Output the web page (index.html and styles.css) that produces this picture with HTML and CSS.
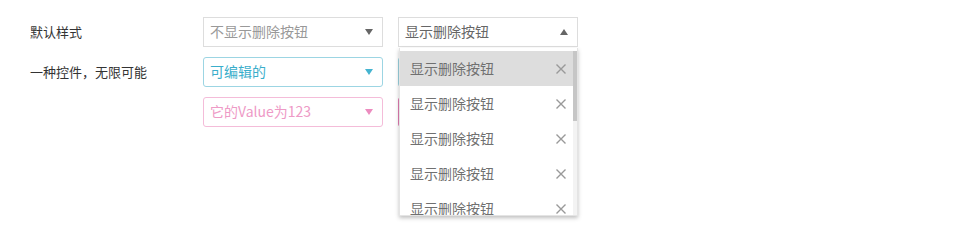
FILE: index.html
```html
<!DOCTYPE html>
<html lang="zh">
<head>
    <meta charset="UTF-8">
    <title>Select 示例</title>
    <link rel="stylesheet" href="styles.css">
</head>
<body>
    <div class="demo">
        <div class="row">
            <div class="label">默认样式</div>
            <div class="select">
                <span class="select-text placeholder">不显示删除按钮</span>
                <span class="arrow"></span>
            </div>
            <div class="select-wrap">
                <div class="select open">
                    <span class="select-text">显示删除按钮</span>
                    <span class="arrow up"></span>
                </div>
                <!-- 下拉列表 -->
                <div class="dropdown">
                    <ul class="options">
                        <li class="option active"><span>显示删除按钮</span><svg class="close" viewBox="0 0 10 10"><path d="M0.5 0.5L9.5 9.5M9.5 0.5L0.5 9.5"/></svg></li>
                        <li class="option"><span>显示删除按钮</span><svg class="close" viewBox="0 0 10 10"><path d="M0.5 0.5L9.5 9.5M9.5 0.5L0.5 9.5"/></svg></li>
                        <li class="option"><span>显示删除按钮</span><svg class="close" viewBox="0 0 10 10"><path d="M0.5 0.5L9.5 9.5M9.5 0.5L0.5 9.5"/></svg></li>
                        <li class="option"><span>显示删除按钮</span><svg class="close" viewBox="0 0 10 10"><path d="M0.5 0.5L9.5 9.5M9.5 0.5L0.5 9.5"/></svg></li>
                        <li class="option"><span>显示删除按钮</span><svg class="close" viewBox="0 0 10 10"><path d="M0.5 0.5L9.5 9.5M9.5 0.5L0.5 9.5"/></svg></li>
                        <li class="option"><span>显示删除按钮</span><svg class="close" viewBox="0 0 10 10"><path d="M0.5 0.5L9.5 9.5M9.5 0.5L0.5 9.5"/></svg></li>
                        <li class="option"><span>显示删除按钮</span><svg class="close" viewBox="0 0 10 10"><path d="M0.5 0.5L9.5 9.5M9.5 0.5L0.5 9.5"/></svg></li>
                        <li class="option"><span>显示删除按钮</span><svg class="close" viewBox="0 0 10 10"><path d="M0.5 0.5L9.5 9.5M9.5 0.5L0.5 9.5"/></svg></li>
                        <li class="option"><span>显示删除按钮</span><svg class="close" viewBox="0 0 10 10"><path d="M0.5 0.5L9.5 9.5M9.5 0.5L0.5 9.5"/></svg></li>
                        <li class="option"><span>显示删除按钮</span><svg class="close" viewBox="0 0 10 10"><path d="M0.5 0.5L9.5 9.5M9.5 0.5L0.5 9.5"/></svg></li>
                        <li class="option"><span>显示删除按钮</span><svg class="close" viewBox="0 0 10 10"><path d="M0.5 0.5L9.5 9.5M9.5 0.5L0.5 9.5"/></svg></li>
                    </ul>
                    <div class="scrollbar"><div class="thumb"></div></div>
                </div>
            </div>
        </div>
        <div class="row">
            <div class="label">一种控件，无限可能</div>
            <div class="select info">
                <span class="select-text">可编辑的</span>
                <span class="arrow"></span>
            </div>
            <div class="select info">
                <span class="select-text">可编辑的</span>
                <span class="arrow"></span>
            </div>
        </div>
        <div class="row">
            <div class="label"></div>
            <div class="select pink">
                <span class="select-text">它的Value为123</span>
                <span class="arrow"></span>
            </div>
            <div class="select pink-fill">
                <span class="select-text">它的Value为123</span>
                <span class="arrow"></span>
            </div>
        </div>
    </div>
</body>
</html>
```

FILE: styles.css
```css
html, body {
    height: 100%;
}

body {
    margin: 0;
    background: #fff;
    font-family: "Microsoft YaHei", "Noto Sans CJK SC", "Noto Sans", sans-serif;
    color: #333;
}

.demo {
    box-sizing: border-box;
    min-height: 100%;
    padding: 17px 0 0 30px;
    display: flex;
    flex-direction: column;
    gap: 10px;
}

.row {
    display: flex;
    align-items: center;
    gap: 15px;
}

.label {
    width: 158px;
    font-size: 13px;
    color: #333;
    padding-bottom: 2px;
}

.select-wrap {
    position: relative;
}

.select {
    box-sizing: border-box;
    width: 180px;
    height: 30px;
    border: 1px solid #ddd;
    background: #fff;
    display: flex;
    align-items: center;
    justify-content: space-between;
    padding: 0 9px 0 6px;
    font-size: 14px;
    color: #666;
}

.select-text {
    padding-bottom: 2px;
}

.select-text.placeholder {
    color: #999;
}

.arrow {
    width: 0;
    height: 0;
    border-left: 4px solid transparent;
    border-right: 4px solid transparent;
    border-top: 6px solid #666;
}

.arrow.up {
    border-top: none;
    border-bottom: 6px solid #666;
}

.select.info {
    border-color: #9cd5e3;
    border-radius: 3px;
    color: #3aaecb;
}

.select.info .arrow {
    border-top-color: #45b4d0;
}

.select.pink {
    border-color: #f4bcd9;
    border-radius: 3px;
    color: #ee9ac6;
}

.select.pink .arrow {
    border-top-color: #ec8cbf;
}

.select.pink-fill {
    border-color: #e47db4;
    border-radius: 3px;
    background: #e47db4;
    color: #fff;
}

/* 下拉列表 */
.dropdown {
    position: absolute;
    top: 31px;
    left: 1px;
    width: 179px;
    box-sizing: border-box;
    background: #fff;
    border: 1px solid #e4e4e4;
    border-top: none;
    box-shadow: 0 2px 4px rgba(0, 0, 0, 0.25);
    padding-top: 3px;
    z-index: 10;
}

.options {
    list-style: none;
    margin: 0;
    padding: 0;
    height: 164px;
    overflow: hidden;
}

.scrollbar {
    position: absolute;
    top: 3px;
    right: 0;
    width: 4px;
    bottom: 0;
    background: #f3f3f3;
}

.thumb {
    height: 70px;
    background: #c6c6c6;
}

.option {
    height: 35px;
    display: flex;
    align-items: center;
    justify-content: space-between;
    padding: 0 11px 2px 10px;
    box-sizing: border-box;
    font-size: 14px;
    color: #707070;
}

.option.active {
    background: #ddd;
}

.close {
    width: 10px;
    height: 10px;
    margin-top: 2px;
    fill: none;
    stroke: #999;
    stroke-width: 1.4;
}
```
